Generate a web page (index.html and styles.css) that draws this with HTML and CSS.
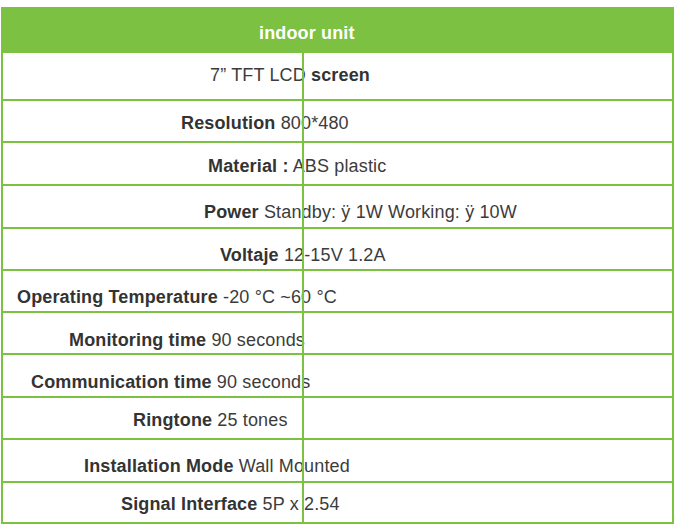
FILE: index.html
```html
<!DOCTYPE html>
<html lang="en">
<head>
<meta charset="utf-8">
<title>indoor unit</title>
<link rel="stylesheet" href="styles.css">
</head>
<body>
<div class="sheet">
  <div class="head">indoor unit</div>
  <div class="row r1"><div class="cell-l">7” TFT LCD <b>screen</b></div><div class="cell-r"></div></div>
  <div class="row r2"><div class="cell-l"><b>Resolution</b> 800*480</div><div class="cell-r"></div></div>
  <div class="row r3"><div class="cell-l"><b>Material :</b> ABS plastic</div><div class="cell-r"></div></div>
  <div class="row r4"><div class="cell-l"><b>Power</b> Standby: ÿ 1W Working: ÿ 10W</div><div class="cell-r"></div></div>
  <div class="row r5"><div class="cell-l"><b>Voltaje</b> 12-15V 1.2A</div><div class="cell-r"></div></div>
  <div class="row r6"><div class="cell-l"><b>Operating Temperature</b> -20 °C ~60 °C</div><div class="cell-r"></div></div>
  <div class="row r7"><div class="cell-l"><b>Monitoring time</b> 90 seconds</div><div class="cell-r"></div></div>
  <div class="row r8"><div class="cell-l"><b>Communication time</b> 90 seconds</div><div class="cell-r"></div></div>
  <div class="row r9"><div class="cell-l"><b>Ringtone</b> 25 tones</div><div class="cell-r"></div></div>
  <div class="row r10"><div class="cell-l"><b>Installation Mode</b> Wall Mounted</div><div class="cell-r"></div></div>
  <div class="row r11"><div class="cell-l"><b>Signal Interface</b> 5P x 2.54</div><div class="cell-r"></div></div>
</div>
</body>
</html>
```

FILE: styles.css
```css
html, body {
  margin: 0;
  padding: 0;
  background: #ffffff;
}

body {
  font-family: "Liberation Sans", Arial, sans-serif;
  font-size: 18px;
  line-height: 20px;
  letter-spacing: 0.15px;
  color: #3c3c3c;
}

.sheet {
  box-sizing: border-box;
  width: 673px;
  margin: 7px 0 0 1px;
  border: 2px solid #7cc142;
  border-top: 0;
}

.head {
  box-sizing: border-box;
  height: 44px;
  margin: 0 -2px;
  padding: 16px 0 0 258px;
  background: #7cc142;
  color: #ffffff;
  font-weight: bold;
}

.row {
  box-sizing: border-box;
  display: grid;
  grid-template-columns: 299px 1fr;
  border-top: 2px solid #7cc142;
  height: 42px;
}

.row b {
  color: #333333;
}

.cell-l {
  white-space: nowrap;
  box-sizing: border-box;
}

.cell-r {
  position: relative;
  border-left: 2px solid #7cc142;
}

.r1 { height: 48px; }
.r1 .cell-l { padding: 12px 0 0 207px; }
.r2 .cell-l { padding: 12px 0 0 178px; }
.r3 { height: 43px; }
.r3 .cell-l { padding: 13px 0 0 205px; }
.r4 { height: 43px; }
.r4 .cell-l { padding: 16px 0 0 201px; }
.r5 .cell-l { padding: 16px 0 0 217px; }
.r6 .cell-l { padding: 16px 0 0 14px; }
.r7 .cell-l { padding: 17px 0 0 66px; }
.r8 { height: 43px; }
.r8 .cell-l { padding: 17px 0 0 28px; }
.r9 .cell-l { padding: 12px 0 0 130px; }
.r10 { height: 43px; }
.r10 .cell-l { padding: 16px 0 0 81px; }
.r11 { height: 41px; }
.r11 .cell-l { padding: 11px 0 0 118px; }
```
